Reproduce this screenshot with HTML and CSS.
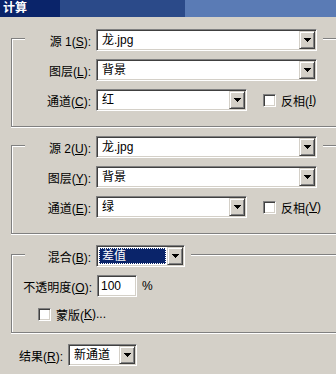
FILE: index.html
```html
<!DOCTYPE html>
<html lang="zh-CN">
<head>
  <meta charset="UTF-8" />
  <meta name="viewport" content="width=device-width, initial-scale=1.0" />
  <title>计算</title>
  <link rel="stylesheet" href="styles.css">
</head>
<body>
  <div class="titlebar">计算</div>

  <div class="dialog">
    <div class="group">
      <div class="row head">
        <label class="lbl">源 1(<u>S</u>):</label>
        <div class="combo w-long"><span class="val">龙.jpg</span><span class="arrow"><svg width="7" height="4" shape-rendering="crispEdges"><polygon points="0,0 7,0 3.5,4" fill="#000"/></svg></span></div>
      </div>
      <div class="row">
        <label class="lbl">图层(<u>L</u>):</label>
        <div class="combo w-long"><span class="val">背景</span><span class="arrow"><svg width="7" height="4" shape-rendering="crispEdges"><polygon points="0,0 7,0 3.5,4" fill="#000"/></svg></span></div>
      </div>
      <div class="row">
        <label class="lbl">通道(<u>C</u>):</label>
        <div class="combo w-mid"><span class="val">红</span><span class="arrow"><svg width="7" height="4" shape-rendering="crispEdges"><polygon points="0,0 7,0 3.5,4" fill="#000"/></svg></span></div>
        <label class="check side"><span class="box"></span>反相(<u>I</u>)</label>
      </div>
    </div>

    <div class="group">
      <div class="row head">
        <label class="lbl">源 2(<u>U</u>):</label>
        <div class="combo w-long"><span class="val">龙.jpg</span><span class="arrow"><svg width="7" height="4" shape-rendering="crispEdges"><polygon points="0,0 7,0 3.5,4" fill="#000"/></svg></span></div>
      </div>
      <div class="row">
        <label class="lbl">图层(<u>Y</u>):</label>
        <div class="combo w-long"><span class="val">背景</span><span class="arrow"><svg width="7" height="4" shape-rendering="crispEdges"><polygon points="0,0 7,0 3.5,4" fill="#000"/></svg></span></div>
      </div>
      <div class="row">
        <label class="lbl">通道(<u>E</u>):</label>
        <div class="combo w-mid"><span class="val">绿</span><span class="arrow"><svg width="7" height="4" shape-rendering="crispEdges"><polygon points="0,0 7,0 3.5,4" fill="#000"/></svg></span></div>
        <label class="check side"><span class="box"></span>反相(<u>V</u>)</label>
      </div>
    </div>

    <div class="group blend">
      <div class="row head">
        <label class="lbl">混合(<u>B</u>):</label>
        <div class="combo w-short"><span class="val sel">差值</span><span class="arrow"><svg width="7" height="4" shape-rendering="crispEdges"><polygon points="0,0 7,0 3.5,4" fill="#000"/></svg></span></div>
      </div>
      <div class="row opacity">
        <label class="lbl">不透明度(<u>O</u>):</label>
        <div class="field">100</div>
        <span class="unit">%</span>
      </div>
      <div class="row mask">
        <label class="check"><span class="box"></span>蒙版(<u>K</u>)...</label>
      </div>
    </div>

    <div class="row result">
      <label class="lbl">结果(<u>R</u>):</label>
      <div class="combo w-result"><span class="val">新通道</span><span class="arrow"><svg width="7" height="4" shape-rendering="crispEdges"><polygon points="0,0 7,0 3.5,4" fill="#000"/></svg></span></div>
    </div>
  </div>
</body>
</html>
```

FILE: styles.css
```css
body {
  margin: 0;
  width: 336px;
  height: 374px;
  overflow: hidden;
  background: #d4d0c8;
  font-family: "Liberation Sans", "Noto Sans CJK SC", sans-serif;
  font-size: 12px;
  color: #000;
}
.titlebar {
  height: 17px;
  line-height: 17px;
  padding-left: 3px;
  color: #fff;
  font-weight: bold;
  background: linear-gradient(to right, #0a246a 0 60px, #2b4a89 60px 185px, #5a7bb5 185px);
}
.dialog {
  padding: 21px 0 0 11px;
}
/* group box runs off the right edge of the dialog crop */
.group {
  border: 1px solid #808080;
  border-right: none;
  box-shadow: inset 1px 1px #fff, 0 1px #fff;
  padding-bottom: 15px;
}
.group + .group {
  margin-top: 18px;
}
.group.blend {
  margin-top: 20px;
  padding-bottom: 7px;
}
.row {
  display: flex;
  align-items: center;
  height: 22px;
  margin: 8px 0 0 13px;
  white-space: nowrap;
}
.row.head {
  width: fit-content;
  margin-top: -10px;
  padding-right: 6px;
  background: #d4d0c8;
}
.lbl {
  width: 66px;
  padding-right: 5px;
  text-align: right;
}
.combo {
  box-sizing: border-box;
  display: flex;
  align-items: center;
  height: 22px;
  padding: 1px;
  background: #fff;
  border: 1px solid;
  border-color: #808080 #fff #fff #808080;
  box-shadow: inset 1px 1px #404040, inset -1px -1px #d4d0c8;
}
.w-long { width: 221px; }
.w-mid { width: 151px; }
.w-short { width: 89px; }
.w-result { width: 69px; }
.val {
  flex: 1;
  padding-left: 4px;
  line-height: 18px;
}
.val.sel {
  box-sizing: border-box;
  height: 16px;
  line-height: 14px;
  margin: 0 1px;
  padding-left: 2px;
  background: #0a246a;
  color: #fff;
  border: 1px dotted #fff;
}
.arrow {
  box-sizing: border-box;
  display: flex;
  align-items: center;
  justify-content: center;
  width: 16px;
  height: 18px;
  background: #d4d0c8;
  border: 1px solid;
  border-color: #d4d0c8 #404040 #404040 #d4d0c8;
  box-shadow: inset 1px 1px #fff, inset -1px -1px #808080;
}
.check {
  display: flex;
  align-items: center;
}
.check.side {
  margin-left: 16px;
}
.box {
  box-sizing: border-box;
  width: 13px;
  height: 13px;
  margin-right: 5px;
  background: #fff;
  border: 1px solid;
  border-color: #808080 #fff #fff #808080;
  box-shadow: inset 1px 1px #404040, inset -1px -1px #d4d0c8;
}
.row.opacity {
  margin-left: 6px;
}
.row.opacity .lbl {
  width: 74px;
}
.field {
  box-sizing: border-box;
  width: 40px;
  height: 22px;
  line-height: 20px;
  padding-left: 3px;
  background: #fff;
  border: 1px solid;
  border-color: #808080 #fff #fff #808080;
  box-shadow: inset 1px 1px #404040, inset -1px -1px #d4d0c8;
}
.unit {
  margin-left: 5px;
}
.row.mask {
  margin: 6px 0 0 26px;
}
.row.result {
  margin: 11px 0 0 6px;
}
.row.result .lbl {
  width: 46px;
}
```
